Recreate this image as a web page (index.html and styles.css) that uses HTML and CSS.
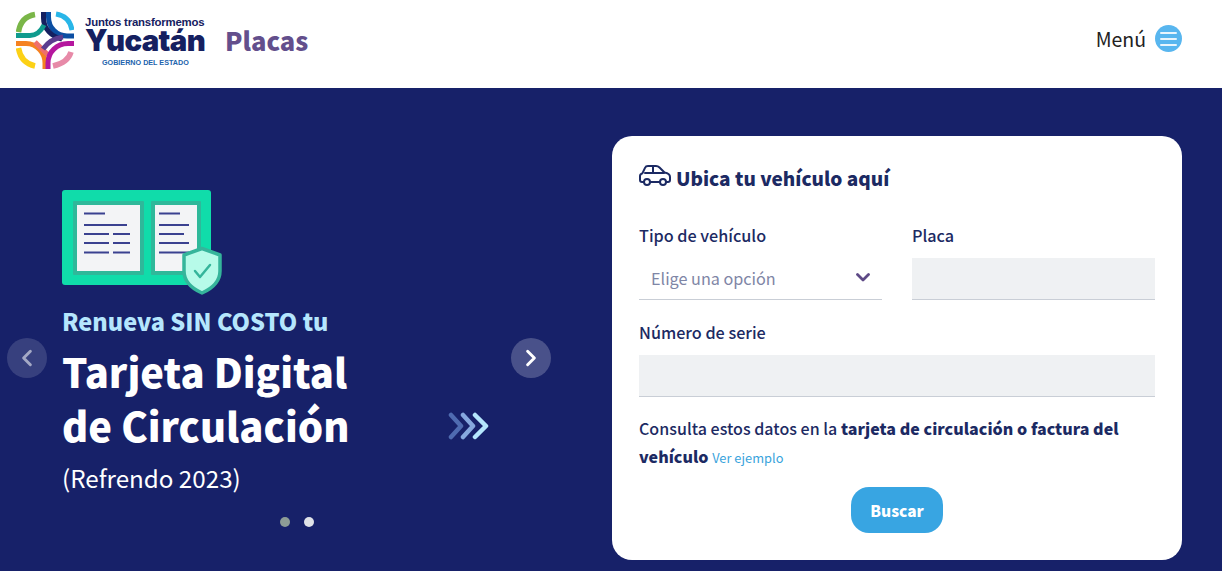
FILE: index.html
```html
<!DOCTYPE html>
<html lang="es">
<head>
<meta charset="utf-8">
<title>Placas</title>
<link rel="stylesheet" href="styles.css">
</head>
<body>
<header class="topbar">
  <div class="brand">
    <svg class="logo" viewBox="0 0 58 58" fill="none" stroke-width="5" aria-hidden="true">
      <path d="M32.500 1V6C32.500 17 41 25 51 25H58" stroke="#0b4ea2"/>
      <path d="M40 3C49 4.500 54.500 10 56 19" stroke="#29b6e8" stroke-width="5"/>
      <path d="M27.500 1V7C27.500 18 36 26 46 28" stroke="#152060"/>
      <path d="M19 3.500C10 5 4 11 2.500 21" stroke="#7ab648" stroke-width="5.500"/>
      <path d="M0 24.500H14C20 24.500 25 20 28 14" stroke="#0f9b8e"/>
      <path d="M0 32.500H10C21 32.500 29 42 29 52V58" stroke="#f58220"/>
      <path d="M2.500 37C4 47 10 53 19 55" stroke="#fcd116" stroke-width="5.500"/>
      <path d="M19 31 32 44" stroke="#ef6f6c"/>
      <path d="M27 38C32 31 39 27 47 26" stroke="#5c3d8f"/>
      <path d="M58 32.500H52C41 32.500 32 41 32 52V58" stroke="#b5179e"/>
      <path d="M37 55C46 53 53 48 55 41" stroke="#e78aa8" stroke-width="5.500"/>
    </svg>
    <div class="wordmark">
      <span class="tagline">Juntos transformemos</span>
      <span class="state">Yucatán</span>
      <span class="gov">GOBIERNO DEL ESTADO</span>
    </div>
    <span class="section">Placas</span>
  </div>
  <button class="menu" type="button">
    <span>Menú</span>
    <span class="burger"><i></i><i></i><i></i></span>
  </button>
</header>

<main class="hero">
  <section class="carousel">
    <button class="arrow prev" type="button" aria-label="Anterior">
      <svg viewBox="0 0 16 16" width="18" height="18" fill="none" stroke="currentColor" stroke-width="2.600" stroke-linecap="round" stroke-linejoin="round"><path d="M11 2 5 8l6 6"/></svg>
    </button>
    <button class="arrow next" type="button" aria-label="Siguiente">
      <svg viewBox="0 0 16 16" width="18" height="18" fill="none" stroke="currentColor" stroke-width="2.600" stroke-linecap="round" stroke-linejoin="round"><path d="M5 2l6 6-6 6"/></svg>
    </button>
    <svg class="card-art" viewBox="0 0 160 105" aria-hidden="true">
      <rect width="149" height="95" rx="3" fill="#10dcaa"/>
      <rect x="11" y="11" width="71" height="74" rx="1" fill="#2fb89a"/>
      <rect x="15" y="15" width="63" height="66" fill="#f3f4f6"/>
      <rect x="89" y="11" width="50" height="74" rx="1" fill="#2fb89a"/>
      <rect x="93" y="15" width="42" height="66" fill="#f3f4f6"/>
      <g stroke="#3a4190" stroke-width="2" fill="none">
        <path d="M22 23.500H43M22 35H65M22 44H47M51 44H68M22 53H47M51 53H68M22 62.500H47M51 62.500H68"/>
        <path d="M97 23.500H118M97 35H127M97 44H122M97 53H127M97 62.500H127"/>
      </g>
      <path d="M140 58.500 158 65V81C158 92 149 99 140 103 131 99 122 92 122 81V65Z" fill="#b7fbe9" stroke="#35b59b" stroke-width="3.500" stroke-linejoin="round"/>
      <path d="M133 81 138 87 148 75" fill="none" stroke="#35b59b" stroke-width="2.500" stroke-linecap="round" stroke-linejoin="round"/>
    </svg>
    <p class="lead">Renueva SIN COSTO tu</p>
    <div class="title-row">
      <h1>Tarjeta Digital<br>de Circulación</h1>
      <svg class="chevrons" viewBox="0 0 41 28" fill="none" stroke-width="4.500" stroke-linecap="round" stroke-linejoin="round" aria-hidden="true">
        <path d="M3 3 13 14 3 25" stroke="#4f6bb0"/>
        <path d="M15 3 25 14 15 25" stroke="#86a8de"/>
        <path d="M27 3 38 14 27 25" stroke="#b5e6fd"/>
      </svg>
    </div>
    <p class="sub">(Refrendo 2023)</p>
    <div class="dots"><span class="dot"></span><span class="dot active"></span></div>
  </section>

  <form class="search">
    <h2>
      <svg class="car" viewBox="0 0 32 22" fill="none" stroke="#1c2a63" stroke-width="2" stroke-linecap="round" stroke-linejoin="round" aria-hidden="true">
        <path d="M5 17H3C1.800 17 1 16.200 1 15V11C1 9.500 2 8.700 3.500 8.200L6 2.800C6.500 1.700 7.500 1 9 1H17C18.500 1 19.500 1.500 20.500 2.500L25.500 7.500C28.500 8 31 9.500 31 12V15C31 16.200 30.200 17 29 17H27"/>
        <path d="M11 17H21M6 8H25M14 1V8"/>
        <circle cx="8" cy="17" r="3"/><circle cx="24" cy="17" r="3"/>
      </svg>
      Ubica tu vehículo aquí
    </h2>
    <div class="fields">
      <div class="field">
        <label>Tipo de vehículo</label>
        <div class="control select">
          <span>Elige una opción</span>
          <svg viewBox="0 0 14 9" width="14" height="9" fill="none" stroke="#5e4a86" stroke-width="2.800" stroke-linecap="round" stroke-linejoin="round"><path d="M1.500 1.500 7 7l5.500-5.500"/></svg>
        </div>
      </div>
      <div class="field">
        <label>Placa</label>
        <div class="control filled"></div>
      </div>
      <div class="field wide">
        <label>Número de serie</label>
        <div class="control filled"></div>
      </div>
    </div>
    <p class="hint">Consulta estos datos en la <b>tarjeta de circulación o factura del vehículo</b> <a href="#">Ver ejemplo</a></p>
    <button class="submit" type="button">Buscar</button>
  </form>
</main>
</body>
</html>
```
FILE: styles.css
```css
* { box-sizing: border-box; }
html, body { margin: 0; height: 571px; overflow: hidden; }
body {
  font-family: "Noto Sans CJK JP", "Noto Sans", sans-serif;
  color: #1c2a63;
  background: #172169;
}
button { font: inherit; border: 0; cursor: pointer; }

.topbar {
  height: 88px;
  background: #fff;
  display: flex;
  align-items: center;
  justify-content: space-between;
  padding: 0 40px 9px 16px;
}
.brand { display: flex; align-items: center; }
.logo { width: 58px; height: 58px; margin-top: 1px; }
.wordmark {
  display: flex;
  flex-direction: column;
  margin-left: 11px;
  margin-top: 3px;
  width: 122px;
}
.tagline {
  font-family: "Liberation Sans", sans-serif;
  font-size: 11.400px;
  line-height: 12px;
  letter-spacing: -0.2px;
  color: #152060;
  font-weight: 700;
  white-space: nowrap;
}
.state {
  font-family: "Inter", sans-serif;
  font-size: 29.300px;
  line-height: 26px;
  font-weight: 900;
  letter-spacing: -0.6px;
  color: #152060;
  white-space: nowrap;
}
.gov {
  font-family: "Liberation Sans", sans-serif;
  font-size: 7.200px;
  line-height: 9px;
  margin-top: 4px;
  padding-left: 17px;
  font-weight: 700;
  color: #2263ad;
  white-space: nowrap;
}
.section {
  margin-left: 18px;
  font-size: 25.500px;
  line-height: 32px;
  font-weight: 900;
  color: #634f8c;
}
.menu {
  display: flex;
  align-items: center;
  gap: 9px;
  background: none;
  color: #222;
  font-size: 19.500px;
  line-height: 28px;
  padding: 0;
  margin-bottom: 2px;
}
.burger {
  width: 27px;
  height: 27px;
  border-radius: 50%;
  background: #58b6ef;
  display: flex;
  flex-direction: column;
  align-items: center;
  justify-content: center;
  gap: 4px;
}
.burger i { display: block; width: 17px; height: 2px; background: #e8f5fd; border-radius: 1px; }

.hero {
  height: 483px;
  display: flex;
  justify-content: space-between;
  padding: 48px 40px 0 0;
}
.carousel {
  position: relative;
  width: 572px;
  padding: 54px 0 0 62px;
  color: #fff;
}
.arrow {
  position: absolute;
  top: 202px;
  width: 40px;
  height: 40px;
  border-radius: 50%;
  background: rgba(255, 255, 255, .22);
  color: #fff;
  display: flex;
  align-items: center;
  justify-content: center;
  padding: 0;
}
.arrow.prev { left: 7px; background: rgba(255, 255, 255, .14); color: rgba(255, 255, 255, .55); }
.arrow.next { left: 511px; }
.card-art { display: block; width: 160px; height: 105px; }
.lead {
  margin: 11px 0 0;
  font-size: 23.500px;
  line-height: 30px;
  font-weight: 900;
  color: #b5e6fd;
}
.title-row { display: flex; align-items: flex-end; margin-top: 8px; }
h1 {
  margin: 0;
  width: 386px;
  font-size: 39.900px;
  line-height: 54px;
  font-weight: 900;
  color: #fff;
}
.chevrons { width: 41px; height: 28px; margin-bottom: 12px; flex: none; }
.sub { margin: 9px 0 0; font-size: 24.200px; line-height: 34px; font-weight: 400; }
.dots { display: flex; gap: 14px; margin: 22px 0 0 218px; }
.dot { width: 10px; height: 10px; border-radius: 50%; background: #8d9c96; }
.dot.active { background: #dfe2e8; }

.search {
  width: 570px;
  height: 424px;
  background: #fff;
  border-radius: 20px;
  padding: 27px;
  display: flex;
  flex-direction: column;
  align-items: flex-start;
}
h2 {
  margin: 0;
  display: flex;
  align-items: center;
  gap: 5px;
  font-size: 19px;
  line-height: 30px;
  font-weight: 900;
  color: #1c2a63;
}
.car { width: 32px; height: 22px; margin-top: -4px; }
.fields {
  width: 100%;
  display: grid;
  grid-template-columns: 243px 243px;
  column-gap: 30px;
  row-gap: 20px;
  margin-top: 30px;
}
.field.wide { grid-column: 1 / -1; }
label {
  display: block;
  font-size: 16.200px;
  line-height: 24px;
  font-weight: 500;
  margin-bottom: 11px;
}
.control { height: 42px; border-bottom: 1px solid #c9ced6; }
.control.filled { background: #eff1f3; }
.select {
  display: flex;
  align-items: center;
  justify-content: space-between;
  padding: 0 12px 2px;
  font-size: 16.200px;
  color: #7f86a6;
}
.hint {
  margin: 17px 0 0;
  font-size: 16px;
  line-height: 28px;
  font-weight: 500;
  letter-spacing: 0.03px;
}
.hint b { font-weight: 800; }
.hint a { font-size: 12.800px; line-height: 1; font-weight: 400; color: #38a3dc; text-decoration: none; }
.submit {
  flex: none;
  align-self: center;
  margin-top: 17px;
  width: 92px;
  height: 46px;
  border-radius: 18px;
  background: #38a5e2;
  color: #fff;
  font-size: 15.500px;
  font-weight: 800;
}
```
